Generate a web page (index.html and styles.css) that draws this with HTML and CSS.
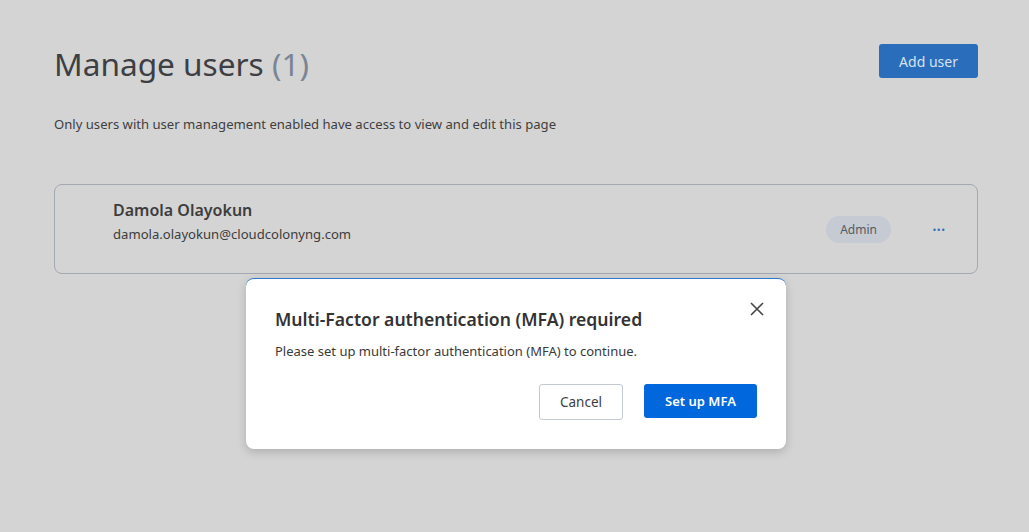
FILE: index.html
```html
<!DOCTYPE html>
<html>
<head>
<meta charset="utf-8">
<link rel="stylesheet" href="styles.css">
</head>
<body>
<div class="page">
  <div class="header">
    <h1 class="title">Manage users <span class="count">(1)</span></h1>
    <button class="btn-add">Add user</button>
  </div>
  <p class="subtitle">Only users with user management enabled have access to view and edit this page</p>
  <div class="card">
    <div class="user">
      <div class="name">Damola Olayokun</div>
      <div class="email">damola.olayokun@cloudcolonyng.com</div>
    </div>
    <div class="actions">
      <span class="pill">Admin</span>
      <span class="dots">&middot;&middot;&middot;</span>
    </div>
  </div>
</div>
<div class="modal">
  <button class="close" aria-label="Close">
    <svg width="14" height="14" viewBox="0 0 14 14"><path d="M1 1L13 13M13 1L1 13" stroke="#444" stroke-width="1.6" fill="none"/></svg>
  </button>
  <h2 class="modal-title">Multi-Factor authentication (MFA) required</h2>
  <p class="modal-text">Please set up multi-factor authentication (MFA) to continue.</p>
  <div class="modal-actions">
    <button class="btn-cancel">Cancel</button>
    <button class="btn-primary">Set up MFA</button>
  </div>
</div>
</body>
</html>
```
FILE: styles.css
```css
* { box-sizing: border-box; }
html, body { margin: 0; padding: 0; }
body {
  background: #d4d4d4;
  font-family: "Noto Sans", "Open Sans", sans-serif;
  color: #3f3f3f;
  width: 1029px;
  height: 532px;
  overflow: hidden;
  position: relative;
}
.page { padding: 44px 51px 0 54px; }
.header { display: flex; justify-content: space-between; align-items: flex-start; }
.title {
  margin: 0;
  font-size: 31.6px;
  font-weight: 400;
  line-height: 40px;
  color: #3d3f44;
  padding-top: 0;
}
.count { color: #7b8594; }
.btn-add {
  font-family: inherit;
  background: #2a6ebb;
  color: #d6e1ef;
  border: none;
  border-radius: 3px;
  font-size: 14px;
  width: 99px;
  height: 34px;
  padding: 0;
}
.subtitle {
  margin: 31px 0 0;
  font-size: 13.1px;
  line-height: 18px;
  color: #3f3f3f;
}
.card {
  margin-top: 51px;
  height: 90px;
  border: 1px solid #a3a8b1;
  border-radius: 8px;
  display: flex;
  justify-content: space-between;
  padding: 14px 32px 0 58px;
}
.name { font-size: 16px; font-weight: 600; line-height: 22px; color: #3d3d3d; }
.email { font-size: 13.1px; line-height: 20px; margin-top: 3px; color: #3d3d3d; }
.actions { display: flex; align-items: center; gap: 41px; height: 60px; }
.pill {
  background: #c5cad3;
  color: #555a63;
  font-size: 12px;
  border-radius: 14px;
  width: 65px;
  height: 27px;
  display: flex;
  align-items: center;
  justify-content: center;
}
.dots { color: #2a6ebb; font-size: 18px; font-weight: 400; letter-spacing: -0.5px; line-height: 1; }
.modal {
  position: absolute;
  left: 246px;
  top: 278px;
  width: 540px;
  height: 171px;
  background: #fff;
  border-radius: 8px;
  border-top: 1px solid #2e7ad0;
  box-shadow: 0 3px 10px rgba(0,0,0,0.18);
  padding: 28px 29px 0 29px;
}
.close {
  position: absolute;
  right: 22px;
  top: 23px;
  background: none;
  border: none;
  padding: 0;
  width: 14px;
  height: 14px;
  display: flex;
}
.modal-title { margin: 0; font-size: 17.6px; font-weight: 600; line-height: 24px; color: #333; }
.modal-text { margin: 11px 0 0; font-size: 13px; line-height: 18px; color: #3a3a3a; }
.modal-actions { display: flex; justify-content: flex-end; gap: 21px; margin-top: 24px; }
.btn-cancel {
  font-family: inherit;
  background: #fff;
  border: 1px solid #c4cad3;
  border-radius: 3px;
  width: 84px;
  height: 36px;
  font-size: 13.5px;
  color: #3d3d3d;
}
.btn-primary {
  font-family: inherit;
  background: #0068dc;
  border: none;
  border-radius: 3px;
  width: 113px;
  height: 34px;
  font-size: 13px;
  font-weight: 600;
  color: #fff;
}
```
